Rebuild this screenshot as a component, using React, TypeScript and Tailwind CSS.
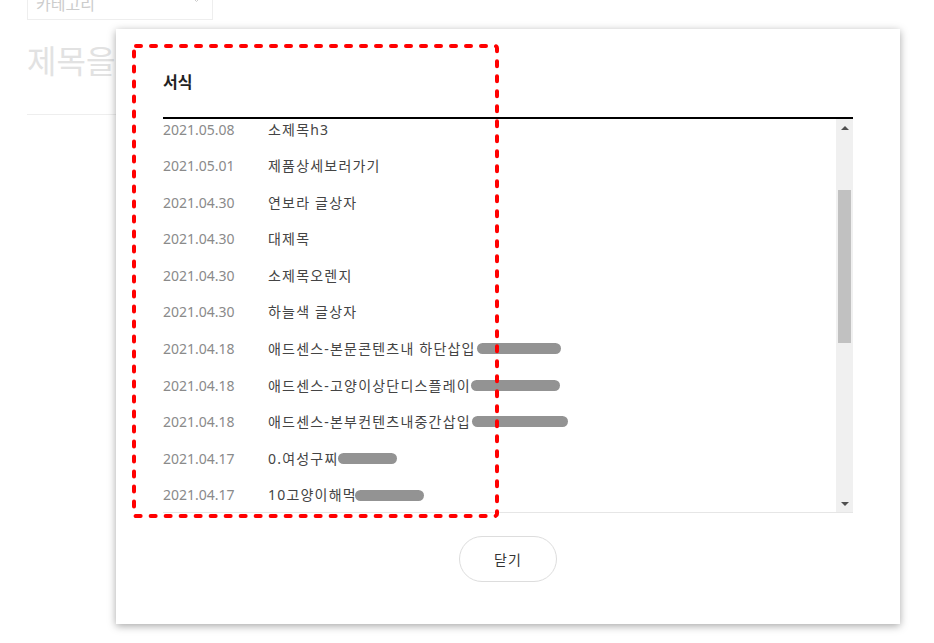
import React from "react";

const rows: { date: string; title: string; bar?: { left: number; width: number } }[] = [
  { date: "2021.05.08", title: "소제목h3" },
  { date: "2021.05.01", title: "제품상세보러가기" },
  { date: "2021.04.30", title: "연보라 글상자" },
  { date: "2021.04.30", title: "대제목" },
  { date: "2021.04.30", title: "소제목오렌지" },
  { date: "2021.04.30", title: "하늘색 글상자" },
  { date: "2021.04.18", title: "애드센스-본문콘텐츠내 하단삽입", bar: { left: 314, width: 84 } },
  { date: "2021.04.18", title: "애드센스-고양이상단디스플레이", bar: { left: 308, width: 89 } },
  { date: "2021.04.18", title: "애드센스-본부컨텐츠내중간삽입", bar: { left: 309, width: 96 } },
  { date: "2021.04.17", title: "0.여성구찌", bar: { left: 175, width: 59 } },
  { date: "2021.04.17", title: "10고양이해먹", bar: { left: 192, width: 69 } },
  { date: "2021.04.17", title: "9고양이" },
];

export default function App() {
  return (
    <div
      className="relative w-[934px] h-[643px] overflow-hidden bg-white"
      style={{ fontFamily: '"Noto Sans", "Noto Sans CJK KR", sans-serif' }}
    >
      {/* background page */}
      <div className="pl-[27px] pr-[40px]">
        <div className="-mt-[12px] w-[186px] h-[32px] border border-[#eeeeee] flex items-center justify-between pl-[8px] pr-[10px]">
          <span className="text-[16px] text-[#cccccc]">카테고리</span>
          <svg width="11" height="7" viewBox="0 0 11 7" className="-mt-[10px]">
            <path d="M1 1 L5.5 5.5 L10 1" fill="none" stroke="#cccccc" strokeWidth="1" />
          </svg>
        </div>
        <div className="mt-[19px] text-[32px] leading-[44px] text-[#e2e2e2] font-normal">제목을 입력하세요</div>
        <div className="mt-[31px] border-t border-[#eeeeee]" />
      </div>

      {/* modal */}
      <div className="absolute left-[116px] top-[29px] w-[784px] h-[595px] bg-white shadow-[0_2px_8px_rgba(0,0,0,0.35)] px-[47px] pt-[41px] flex flex-col">
        <div className="text-[16px] leading-[24px] font-bold text-[#222222]">서식</div>
        <div className="mt-[23px] border-t-2 border-black" />
        <div className="flex h-[394px] border-b border-[#e6e6e6]">
          <div className="flex-1 overflow-hidden">
            <div className="-mt-[8.3px]">
              {rows.map((r, i) => (
                <div key={i} className="relative flex items-center h-[36.6px] text-[14px]">
                  <span className="w-[105px] text-[#8a8a8a]">{r.date}</span>
                  <span className="text-[#444444] tracking-[1.2px]">{r.title}</span>
                  {r.bar && (
                    <span
                      className="absolute top-[13px] h-[11px] rounded-full bg-[#939393]"
                      style={{ left: r.bar.left, width: r.bar.width }}
                    />
                  )}
                </div>
              ))}
            </div>
          </div>
          <div className="w-[17px] bg-[#f0f0f0] flex flex-col items-center">
            <div className="h-[17px] flex items-center justify-center">
              <svg width="8" height="4" viewBox="0 0 8 4">
                <path d="M0 4 L4 0 L8 4 Z" fill="#505050" />
              </svg>
            </div>
            <div className="mt-[54px] w-[13px] h-[153px] bg-[#c1c1c1]" />
            <div className="flex-1" />
            <div className="h-[17px] flex items-center justify-center">
              <svg width="8" height="4" viewBox="0 0 8 4">
                <path d="M0 0 L8 0 L4 4 Z" fill="#505050" />
              </svg>
            </div>
          </div>
        </div>
        <div className="mt-[23px] flex justify-center">
          <button className="w-[98px] h-[46px] rounded-full border border-[#dddddd] bg-white text-[14px] text-[#333333] tracking-[1px]">
            닫기
          </button>
        </div>
      </div>

      {/* red dashed annotation */}
      <svg className="absolute left-0 top-0 pointer-events-none" width="934" height="643">
        <rect
          x="134"
          y="46"
          width="363"
          height="470"
          rx="2"
          fill="none"
          stroke="#ff0000"
          strokeWidth="4"
          strokeDasharray="5 10"
          strokeLinecap="round"
        />
      </svg>
    </div>
  );
}
